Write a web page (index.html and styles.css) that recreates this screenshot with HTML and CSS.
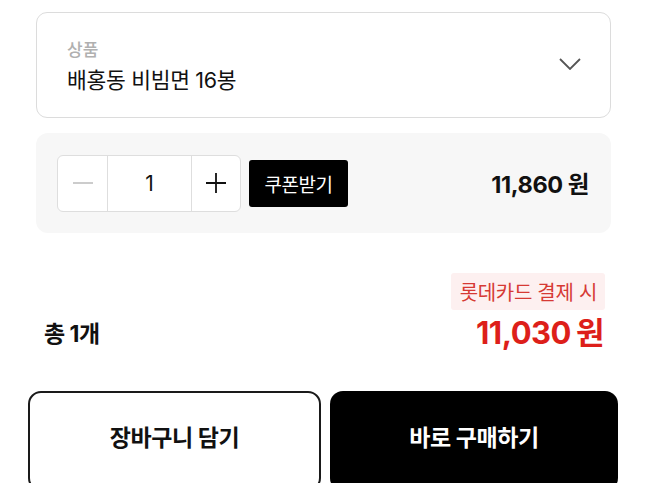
FILE: index.html
```html
<!DOCTYPE html>
<html lang="ko">
<head>
<meta charset="utf-8">
<link rel="stylesheet" href="styles.css">
</head>
<body>
<div class="page">
  <div class="select">
    <div class="select-text">
      <div class="select-label">상품</div>
      <div class="select-value">배홍동 비빔면 16봉</div>
    </div>
    <svg class="chevron" width="22" height="12" viewBox="0 0 22 12"><path d="M1 1 L11 11 L21 1" fill="none" stroke="#555" stroke-width="1.8"/></svg>
  </div>

  <div class="option">
    <div class="stepper">
      <div class="step-btn">
        <svg width="22" height="22" viewBox="0 0 22 22"><path d="M1 11 H21" stroke="#bbb" stroke-width="1.5"/></svg>
      </div>
      <div class="step-qty">1</div>
      <div class="step-btn plus">
        <svg width="22" height="22" viewBox="0 0 22 22"><path d="M1 11 H21 M11 1 V21" stroke="#111" stroke-width="1.8"/></svg>
      </div>
    </div>
    <button class="coupon">쿠폰받기</button>
    <div class="option-price">11,860<span class="won">원</span></div>
  </div>

  <div class="summary">
    <div class="total-label">총 1개</div>
    <div class="total-right">
      <div class="badge">롯데카드 결제 시</div>
      <div class="total-price">11,030<span class="won">원</span></div>
    </div>
  </div>
</div>

<div class="actions">
  <button class="btn btn-cart">장바구니 담기</button>
  <button class="btn btn-buy">바로 구매하기</button>
</div>
</body>
</html>
```

FILE: styles.css
```css
* { box-sizing: border-box; }
html, body { margin: 0; padding: 0; background: #fff; }
body {
  width: 648px;
  height: 483px;
  overflow: hidden;
  font-family: Inter, "Noto Sans CJK KR", sans-serif;
  color: #111;
}
.page {
  padding: 12px 37px 0 36px;
}
.select {
  height: 106px;
  border: 1px solid #dcdcdc;
  border-radius: 11px;
  display: flex;
  align-items: center;
  justify-content: space-between;
  padding: 0 29px 0 30px;
}
.select-text { display: flex; flex-direction: column; padding-top: 4px; }
.select-label {
  font-size: 17px;
  color: #b0b0b0;
  line-height: 20px;
  font-weight: 500;
}
.select-value {
  font-size: 21.5px;
  line-height: 28px;
  margin-top: 6px;
  color: #111;
  letter-spacing: -0.3px;
}
.chevron { margin-top: -2px; }

.option {
  margin-top: 15px;
  height: 100px;
  background: #f7f7f7;
  border-radius: 12px;
  display: flex;
  align-items: center;
  padding: 0 22px 0 21px;
}
.stepper {
  display: flex;
  height: 57px;
  width: 184px;
  border: 1px solid #dedede;
  border-radius: 6px;
  background: #fff;
}
.step-btn {
  width: 49px;
  display: flex;
  align-items: center;
  justify-content: center;
}
.step-btn.plus { width: 48px; }
.step-qty {
  flex: 1;
  border-left: 1px solid #dedede;
  border-right: 1px solid #dedede;
  display: flex;
  align-items: center;
  justify-content: center;
  font-size: 21px;
  color: #111;
}
.coupon {
  margin-left: 8px;
  height: 47px;
  width: 99px;
  background: #000;
  color: #fff;
  border: none;
  border-radius: 3px;
  font-family: inherit;
  font-size: 19px;
  letter-spacing: -0.5px;
  padding: 0;
}
.option-price {
  margin-left: auto;
  font-size: 23.5px;
  font-weight: 700;
  letter-spacing: -0.4px;
}
.won { margin-left: 5px; }

.summary {
  margin-top: 40px;
  display: flex;
  justify-content: space-between;
  align-items: flex-end;
  padding: 0 7px 0 8px;
}
.total-label {
  font-size: 23px;
  font-weight: 700;
  padding-bottom: 6px;
  letter-spacing: -0.5px;
}
.total-right {
  display: flex;
  flex-direction: column;
  align-items: flex-end;
}
.badge {
  height: 37px;
  padding: 0 8px 0 9px;
  background: #fdf0f0;
  color: #d63a34;
  font-size: 20px;
  letter-spacing: -0.3px;
  display: flex;
  align-items: center;
  border-radius: 3px;
  margin-right: -1px;
}
.total-price {
  margin-top: 1px;
  font-size: 31px;
  font-weight: 700;
  color: #dd1f1a;
  letter-spacing: -0.5px;
  line-height: 44px;
}

.actions {
  margin-top: 36px;
  display: grid;
  grid-template-columns: 293px 288px;
  gap: 9px;
  padding-left: 28px;
}
.btn {
  height: 100px;
  border-radius: 13px;
  font-family: inherit;
  font-size: 23px;
  font-weight: 700;
  padding: 0 0 10px 0;
  letter-spacing: -0.4px;
}
.btn-cart {
  background: #fff;
  border: 2px solid #1a1a1a;
  color: #111;
}
.btn-buy {
  background: #000;
  border: none;
  color: #fff;
}
```
